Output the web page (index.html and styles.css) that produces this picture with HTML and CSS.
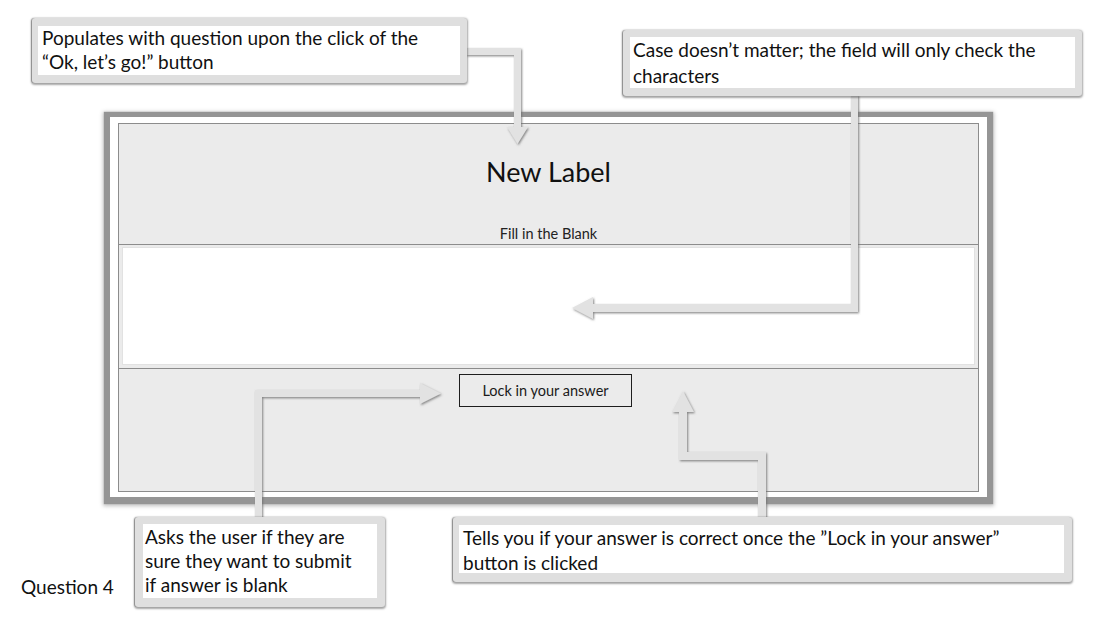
FILE: index.html
```html
<!DOCTYPE html>
<html lang="en">
<head>
<meta charset="utf-8">
<title>Question 4</title>
<link rel="stylesheet" href="styles.css">
</head>
<body>
<div class="canvas">
  <div class="frame">
    <div class="panel">
      <div class="sec-top">
        <div class="title">New Label</div>
        <div class="sub">Fill in the Blank</div>
      </div>
      <div class="sec-field"><div class="field"></div></div>
      <div class="sec-bottom"><button class="lock" type="button">Lock in your answer</button></div>
    </div>
  </div>
  <div class="qlabel">Question 4</div>

  <svg class="arrows" width="1101" height="618" viewBox="0 0 1101 618" aria-hidden="true">
    <defs>
      <filter id="sh" x="-20%" y="-20%" width="140%" height="140%">
        <feDropShadow dx="1" dy="1.2" stdDeviation="0.8" flood-color="#6f6f6f" flood-opacity="0.85"/>
      </filter>
    </defs>
    <g filter="url(#sh)" fill="#e2e2e2">
      <path d="M466 48 L521 48 L521 127 L528 127 L517.5 144 L507 127 L514 127 L514 55 L466 55 Z"/>
      <path d="M851 95 L858 95 L858 312 L593 312 L593 319 L572 308 L593 297 L593 304 L851 304 Z"/>
      <path d="M255 518 L255 390 L420 390 L420 383 L441 393.5 L420 404 L420 397 L262 397 L262 518 Z"/>
      <path d="M758 518 L758 460 L679 460 L679 412 L672 412 L683 391 L694 412 L687 412 L687 452 L766 452 L766 518 Z"/>
    </g>
  </svg>

  <div class="note note-1"><div class="note-body">Populates with question upon the click of the<br>“Ok, let’s go!” button</div></div>
  <div class="note note-2"><div class="note-body">Case doesn’t matter; the field will only check the<br>characters</div></div>
  <div class="note note-3"><div class="note-body">Asks the user if they are<br>sure they want to submit<br>if answer is blank</div></div>
  <div class="note note-4"><div class="note-body">Tells you if your answer is correct once the ”Lock in your answer”<br>button is clicked</div></div>
</div>
</body>
</html>
```

FILE: styles.css
```css
html, body {
  margin: 0;
  padding: 0;
  background: #ffffff;
}

.canvas {
  position: relative;
  width: 1101px;
  height: 618px;
  overflow: hidden;
  padding-top: 117px;
  box-sizing: border-box;
  font-family: Lato, "Open Sans", sans-serif;
  color: #111;
}

/* main app window */
.frame {
  margin-left: 110px;
  width: 877px;
  height: 380px;
  box-sizing: border-box;
  padding: 6px 8px 5px 8px;
  background: #ffffff;
  box-shadow: 0 1px 1px 6px #959595, 0 2px 4px 7px rgba(0,0,0,0.25);
}

.panel {
  height: 100%;
  box-sizing: border-box;
  border: 1px solid #8c8c8c;
  background: #ebebeb;
  display: flex;
  flex-direction: column;
}

.sec-top {
  border-bottom: 1px solid #8c8c8c;
  display: flex;
  flex-direction: column;
  align-items: center;
  padding-top: 32px;
  height: 88px;
}

.title {
  font-size: 27px;
  line-height: 31px;
  color: #111;
}

.sub {
  margin-top: 38px;
  font-size: 14.5px;
  line-height: 17px;
  color: #222;
}

.sec-field {
  padding: 2px 3px 3px 3px;
  border-bottom: 1px solid #8c8c8c;
  height: 118px;
  display: flex;
}

.field {
  flex: 1;
  background: #ffffff;
  border: 1px solid #e2e2e2;
}

.sec-bottom {
  flex: 1;
  display: flex;
  justify-content: center;
  align-items: flex-start;
  padding-top: 5px;
  padding-right: 6px;
}

.lock {
  width: 173px;
  height: 33px;
  border: 1.5px solid #1e1e1e;
  background: #ebebeb;
  font-family: Lato, "Open Sans", sans-serif;
  font-size: 14.5px;
  color: #1a1a1a;
  padding: 0;
  margin: 0;
}

.qlabel {
  margin: 78px 0 0 21px;
  font-size: 19px;
  line-height: 24px;
  color: #111;
}

.arrows {
  position: absolute;
  left: 0;
  top: 0;
}

/* callouts */
.note {
  position: absolute;
  box-sizing: border-box;
  background: #dfdfdf;
  border-radius: 3px;
  box-shadow: 0 1px 2px 1px rgba(0,0,0,0.35), -1px 0 1px rgba(0,0,0,0.25);
}

.note-body {
  height: 100%;
  box-sizing: border-box;
  background: #ffffff;
  font-size: 19px;
  line-height: 24px;
  color: #111;
  padding: 0 0 0 4px;
  white-space: nowrap;
}

.note-1 { left: 32px;  top: 18px;  width: 435px; height: 65px; padding: 8px 7px 8px 6px; }
.note-2 { left: 623px; top: 30px;  width: 459px; height: 66px; padding: 7px 7px 8px 7px; }
.note-3 { left: 135px; top: 517px; width: 250px; height: 90px; padding: 7px 8px 9px 8px; }
.note-4 { left: 453px; top: 517px; width: 619px; height: 65px; padding: 8px 8px 9px 6px; }

.note-2 .note-body { line-height: 26px; padding-left: 3px; }
.note-3 .note-body { padding-left: 2px; padding-top: 1px; }
.note-4 .note-body { line-height: 25px; }
```
